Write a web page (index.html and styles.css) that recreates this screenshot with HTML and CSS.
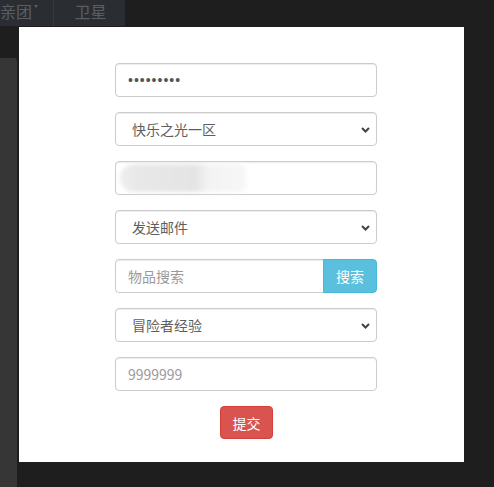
FILE: index.html
```html
<!DOCTYPE html>
<html lang="zh-CN">
<head>
<meta charset="utf-8">
<title>表单</title>
<link rel="stylesheet" href="styles.css">
</head>
<body>
<div class="app">
  <nav class="topnav">
    <span class="nav-item nav-first"><span class="nav-label">亲团</span><svg class="caret" width="4" height="3" viewBox="0 0 4 3"><path d="M0 0 L4 0 L2 3 Z" fill="#5a5e63"/></svg></span>
    <span class="nav-item nav-second">卫星</span>
  </nav>
  <aside class="sidepanel"></aside>
</div>
<div class="modal">
  <form class="form">
    <div class="form-group">
      <input class="form-control pass" type="text" value="•••••••••">
    </div>
    <div class="form-group select-wrap">
      <select class="form-control form-select"><option>快乐之光一区</option></select>
      <svg class="chevron" width="9" height="6" viewBox="0 0 9 6"><path d="M1 1 L4.5 4.5 L8 1" fill="none" stroke="#444" stroke-width="2"/></svg>
    </div>
    <div class="form-group blur-wrap">
      <input class="form-control" type="text" value="">
      <span class="redact"></span>
    </div>
    <div class="form-group select-wrap">
      <select class="form-control form-select"><option>发送邮件</option></select>
      <svg class="chevron" width="9" height="6" viewBox="0 0 9 6"><path d="M1 1 L4.5 4.5 L8 1" fill="none" stroke="#444" stroke-width="2"/></svg>
    </div>
    <div class="form-group input-group">
      <input class="form-control group-input" type="text" placeholder="物品搜索">
      <button class="btn btn-info" type="button">搜索</button>
    </div>
    <div class="form-group select-wrap">
      <select class="form-control form-select"><option>冒险者经验</option></select>
      <svg class="chevron" width="9" height="6" viewBox="0 0 9 6"><path d="M1 1 L4.5 4.5 L8 1" fill="none" stroke="#444" stroke-width="2"/></svg>
    </div>
    <div class="form-group">
      <input class="form-control" type="text" placeholder="9999999">
    </div>
    <div class="actions">
      <button class="btn btn-danger" type="button">提交</button>
    </div>
  </form>
</div>
</body>
</html>
```
FILE: styles.css
```css
* { box-sizing: border-box; }
html, body {
  margin: 0;
  width: 494px;
  height: 487px;
  overflow: hidden;
  background: #1e1e1e;
  font-family: "Noto Sans CJK SC", "Noto Sans", sans-serif;
}
.app {
  display: flex;
  flex-direction: column;
  height: 487px;
}
.topnav {
  display: flex;
  width: 125px;
  height: 26px;
  background: #2a2e33;
  color: #5a5e63;
  font-size: 16px;
  line-height: 20px;
}
.nav-item {
  display: flex;
  align-items: flex-start;
  padding-top: 1px;
  white-space: nowrap;
}
.nav-first {
  width: 54px;
  border-right: 1px solid #363a3f;
}
.caret {
  margin: 4px 0 0 2px;
}
.nav-second {
  flex: 1;
  justify-content: center;
  padding-left: 2px;
}
.sidepanel {
  width: 17px;
  flex: 1;
  margin-top: 32px;
  background: #363636;
  border-top-right-radius: 3px;
}
.modal {
  position: absolute;
  left: 19px;
  top: 27px;
  width: 445px;
  height: 435px;
  background: #fff;
}
.form {
  width: 262px;
  margin: 36px 0 0 96px;
}
.form-group {
  margin-bottom: 15px;
}
.form-control {
  display: block;
  width: 100%;
  height: 34px;
  padding: 6px 12px;
  font-family: "Noto Sans CJK SC", "Noto Sans", sans-serif;
  font-size: 14px;
  line-height: 20px;
  color: #5e5e5e;
  background: #fff;
  border: 1px solid #ccc;
  border-radius: 4px;
  box-shadow: inset 0 1px 1px rgba(0,0,0,.075);
  outline: none;
}
.form-control::placeholder { color: #9a9a9a; }
.form-control.pass {
  font-family: "Liberation Sans", sans-serif;
  letter-spacing: 1px;
  color: #555;
}
.select-wrap, .blur-wrap { position: relative; }
.form-select {
  appearance: none;
  -webkit-appearance: none;
  padding-left: 16px;
}
.chevron {
  position: absolute;
  right: 7px;
  top: 15px;
}
.redact {
  position: absolute;
  left: 5px;
  top: 3px;
  width: 126px;
  height: 28px;
  border-radius: 14px 6px 6px 14px;
  background: linear-gradient(90deg, #ededed 0%, #e8e8e8 15%, #e4e4e4 60%, #f3f3f3 70%, #f7f7f7 100%);
  filter: blur(2px);
}
.input-group {
  display: flex;
}
.group-input {
  flex: 1;
  width: auto;
  border-top-right-radius: 0;
  border-bottom-right-radius: 0;
}
.btn {
  height: 34px;
  padding: 6px 12px;
  font-family: "Noto Sans CJK SC", "Noto Sans", sans-serif;
  font-size: 14px;
  line-height: 20px;
  color: #fff;
  white-space: nowrap;
  border: 1px solid transparent;
  border-radius: 4px;
  cursor: pointer;
}
.btn-info {
  width: 54px;
  background: #5bc0de;
  border-color: #46b8da;
  border-top-left-radius: 0;
  border-bottom-left-radius: 0;
  margin-left: -1px;
}
.btn-danger {
  height: 33px;
  padding: 5px 11px 5px 12px;
  background: #d9534f;
  border-color: #d43f3a;
}
.actions {
  display: flex;
  justify-content: center;
}
```
